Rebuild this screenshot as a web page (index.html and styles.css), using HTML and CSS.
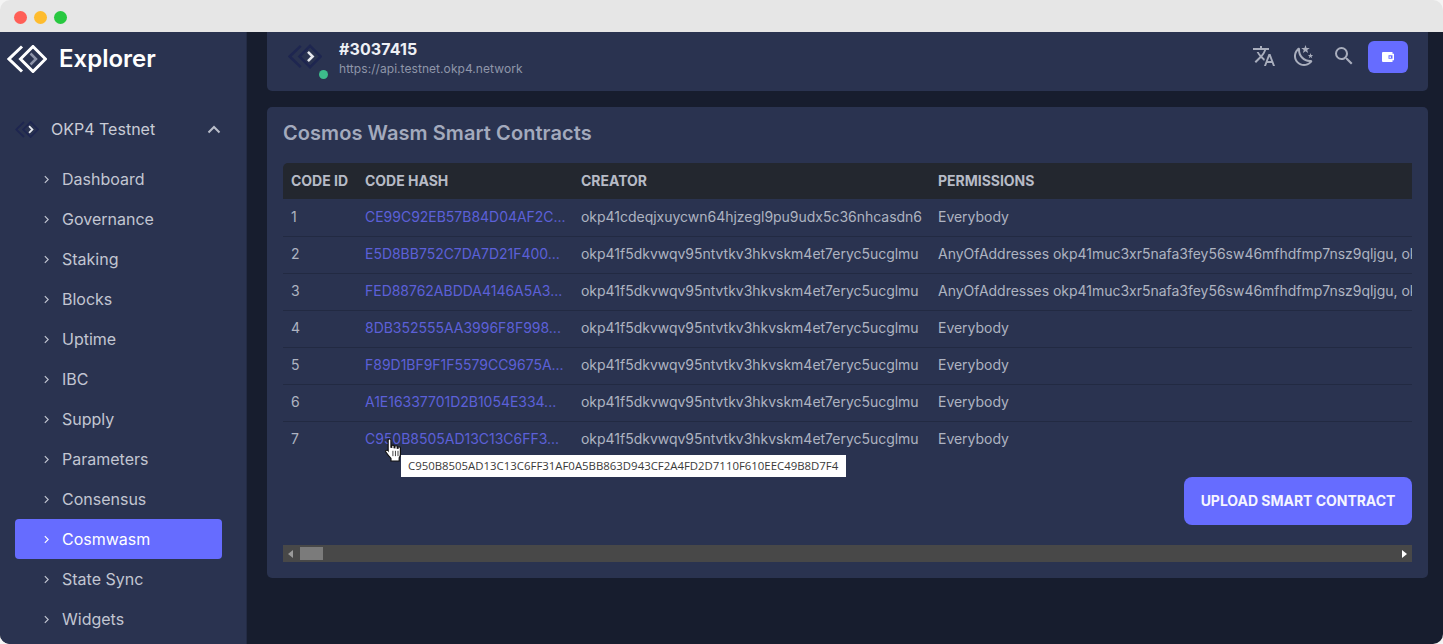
FILE: index.html
```html
<!DOCTYPE html>
<html lang="en">
<head>
<meta charset="utf-8">
<title>Cosmos Wasm Smart Contracts</title>
<link rel="stylesheet" href="styles.css">
</head>
<body>
<div class="window">
  <div class="titlebar">
    <span class="light red"></span><span class="light yellow"></span><span class="light green"></span>
  </div>
  <div class="app">
    <aside class="sidebar">
      <div class="brand">
        <svg class="brand-logo" viewBox="0 0 40 28"><path class="logo-back" d="M15 1.500 2 14l13 12.500"/><path class="logo-front" d="M26 1.500 38.500 14 26 26.500 13.500 14Z"/><path class="logo-chev" d="m23.500 8.500 5.500 5.500-5.500 5.500"/></svg>
        <span class="brand-name">Explorer</span>
      </div>
      <div class="chain">
        <svg class="chain-logo" viewBox="0 0 40 28"><path class="logo-back" d="M15 1.500 2 14l13 12.500"/><path class="logo-front" d="M26 1.500 38.500 14 26 26.500 13.500 14Z"/><path class="logo-chev" d="m23.500 8.500 5.500 5.500-5.500 5.500"/></svg>
        <span class="chain-name">OKP4 Testnet</span>
        <svg class="chain-toggle" viewBox="0 0 14 9"><path d="M1.500 7.500 7 2l5.500 5.500"/></svg>
      </div>
      <nav class="menu">
        <a class="menu-item"><svg class="chev" viewBox="0 0 6 10"><path d="m1 1 4 4-4 4"/></svg>Dashboard</a>
        <a class="menu-item"><svg class="chev" viewBox="0 0 6 10"><path d="m1 1 4 4-4 4"/></svg>Governance</a>
        <a class="menu-item"><svg class="chev" viewBox="0 0 6 10"><path d="m1 1 4 4-4 4"/></svg>Staking</a>
        <a class="menu-item"><svg class="chev" viewBox="0 0 6 10"><path d="m1 1 4 4-4 4"/></svg>Blocks</a>
        <a class="menu-item"><svg class="chev" viewBox="0 0 6 10"><path d="m1 1 4 4-4 4"/></svg>Uptime</a>
        <a class="menu-item"><svg class="chev" viewBox="0 0 6 10"><path d="m1 1 4 4-4 4"/></svg>IBC</a>
        <a class="menu-item"><svg class="chev" viewBox="0 0 6 10"><path d="m1 1 4 4-4 4"/></svg>Supply</a>
        <a class="menu-item"><svg class="chev" viewBox="0 0 6 10"><path d="m1 1 4 4-4 4"/></svg>Parameters</a>
        <a class="menu-item"><svg class="chev" viewBox="0 0 6 10"><path d="m1 1 4 4-4 4"/></svg>Consensus</a>
        <a class="menu-item active"><svg class="chev" viewBox="0 0 6 10"><path d="m1 1 4 4-4 4"/></svg>Cosmwasm</a>
        <a class="menu-item"><svg class="chev" viewBox="0 0 6 10"><path d="m1 1 4 4-4 4"/></svg>State Sync</a>
        <a class="menu-item"><svg class="chev" viewBox="0 0 6 10"><path d="m1 1 4 4-4 4"/></svg>Widgets</a>
      </nav>
    </aside>
    <main class="main">
      <header class="topbar">
        <div class="node">
          <div class="node-logo">
            <svg class="node-svg" viewBox="0 0 40 28"><path class="logo-back" d="M15 1.500 2 14l13 12.500"/><path class="logo-front" d="M26 1.500 38.500 14 26 26.500 13.500 14Z"/><path class="logo-chev" d="m23.500 8.500 5.500 5.500-5.500 5.500"/></svg>
            <span class="status-dot"></span>
          </div>
          <div class="node-text">
            <div class="node-height">#3037415</div>
            <div class="node-url">https://api.testnet.okp4.network</div>
          </div>
        </div>
        <div class="tools">
          <svg class="tool" viewBox="0 0 24 24"><path d="M12.870 15.070 10.330 12.560 10.360 12.530C12.100 10.590 13.340 8.360 14.070 6H17V4H10V2H8V4H1V6H12.170C11.500 7.920 10.440 9.750 9 11.350 8.070 10.320 7.300 9.190 6.690 8H4.690C5.420 9.630 6.420 11.170 7.670 12.560L2.580 17.580 4 19 9 14 12.110 17.110 12.870 15.070M18.500 10H16.500L12 22H14L15.120 19H19.870L21 22H23L18.500 10M15.880 17 17.500 12.670 19.120 17H15.880Z"/></svg>
          <svg class="tool" viewBox="0 0 24 24"><path d="M17.750 4.090 15.220 6.030 16.130 9.090 13.500 7.280 10.870 9.090 11.780 6.030 9.250 4.090 12.440 4 13.500 1 14.560 4 17.750 4.090M21.250 11 19.610 12.250 20.200 14.230 18.500 13.060 16.800 14.230 17.390 12.250 15.750 11 17.810 10.950 18.500 9 19.190 10.950 21.250 11M18.970 15.950C19.800 15.870 20.690 17.050 20.160 17.800 19.840 18.250 19.500 18.670 19.080 19.070 15.170 23 8.840 23 4.940 19.070 1.030 15.170 1.030 8.830 4.940 4.930 5.340 4.530 5.760 4.170 6.210 3.850 6.960 3.320 8.140 4.210 8.060 5.040 7.790 7.900 8.750 10.870 10.950 13.060 13.140 15.260 16.100 16.220 18.970 15.950M17.330 17.970C14.500 17.810 11.700 16.640 9.530 14.500 7.360 12.310 6.200 9.500 6.040 6.680 3.230 9.820 3.340 14.640 6.350 17.660 9.370 20.670 14.190 20.780 17.330 17.970Z"/></svg>
          <svg class="tool" viewBox="0 0 24 24"><path d="M9.500 3A6.500 6.500 0 0 1 16 9.500C16 11.110 15.410 12.590 14.440 13.730L14.710 14H15.500L20.500 19 19 20.500 14 15.500V14.710L13.730 14.440C12.590 15.410 11.110 16 9.500 16A6.500 6.500 0 0 1 3 9.500 6.500 6.500 0 0 1 9.500 3M9.500 5C7 5 5 7 5 9.500 5 12 7 14 9.500 14 12 14 14 12 14 9.500 14 7 12 5 9.500 5Z"/></svg>
          <button class="wallet-btn" type="button" aria-label="Wallet">
            <svg class="wallet-icon" viewBox="0 0 12 10"><path fill-rule="evenodd" d="M1 0h9.500v1.800H12v6.400h-1.500V10H1a1 1 0 0 1-1-1V1a1 1 0 0 1 1-1Zm5.500 3.200v3.600H10.500V3.200Zm1.700 1a.9.9 0 1 0 0 1.800.9.9 0 0 0 0-1.800Z"/></svg>
          </button>
        </div>
      </header>
      <section class="card">
        <h1 class="card-title">Cosmos Wasm Smart Contracts</h1>
        <div class="table-wrap">
          <table class="codes">
            <colgroup><col class="col-id"><col class="col-hash"><col class="col-creator"><col class="col-perm"></colgroup>
            <thead>
              <tr><th>Code Id</th><th>Code Hash</th><th>Creator</th><th>Permissions</th></tr>
            </thead>
            <tbody>
              <tr><td>1</td><td><a class="hash">CE99C92EB57B84D04AF2C...</a></td><td>okp41cdeqjxuycwn64hjzegl9pu9udx5c36nhcasdn6</td><td>Everybody</td></tr>
              <tr><td>2</td><td><a class="hash">E5D8BB752C7DA7D21F400...</a></td><td>okp41f5dkvwqv95ntvtkv3hkvskm4et7eryc5ucglmu</td><td>AnyOfAddresses okp41muc3xr5nafa3fey56sw46mfhdfmp7nsz9qljgu, okp41f5dkvwqv95ntvtkv3hkvskm4et7eryc5ucglmu</td></tr>
              <tr><td>3</td><td><a class="hash">FED88762ABDDA4146A5A3...</a></td><td>okp41f5dkvwqv95ntvtkv3hkvskm4et7eryc5ucglmu</td><td>AnyOfAddresses okp41muc3xr5nafa3fey56sw46mfhdfmp7nsz9qljgu, okp41f5dkvwqv95ntvtkv3hkvskm4et7eryc5ucglmu</td></tr>
              <tr><td>4</td><td><a class="hash">8DB352555AA3996F8F998...</a></td><td>okp41f5dkvwqv95ntvtkv3hkvskm4et7eryc5ucglmu</td><td>Everybody</td></tr>
              <tr><td>5</td><td><a class="hash">F89D1BF9F1F5579CC9675A...</a></td><td>okp41f5dkvwqv95ntvtkv3hkvskm4et7eryc5ucglmu</td><td>Everybody</td></tr>
              <tr><td>6</td><td><a class="hash">A1E16337701D2B1054E334...</a></td><td>okp41f5dkvwqv95ntvtkv3hkvskm4et7eryc5ucglmu</td><td>Everybody</td></tr>
              <tr class="last"><td>7</td><td><a class="hash">C950B8505AD13C13C6FF3...</a></td><td>okp41f5dkvwqv95ntvtkv3hkvskm4et7eryc5ucglmu</td><td>Everybody</td></tr>
            </tbody>
          </table>
        </div>
        <div class="actions"><button class="upload" type="button">Upload Smart Contract</button></div>
        <div class="scrollbar">
          <svg class="scroll-arrow" viewBox="0 0 5 8"><path d="M5 0v8L0 4Z"/></svg>
          <span class="scroll-thumb"></span>
          <span class="scroll-fill"></span>
          <svg class="scroll-arrow bright" viewBox="0 0 5 8"><path d="M0 0v8l5-4Z"/></svg>
        </div>
        <div class="tooltip">C950B8505AD13C13C6FF31AF0A5BB863D943CF2A4FD2D7110F610EEC49B8D7F4</div>
        <svg class="cursor" viewBox="1 0 14 22.500" preserveAspectRatio="none"><path d="M3.600 1.600c0-1 2.300-1 2.300 0v7.200l.6.100V7.400c0-1 2-1 2 0v1.700l.6.100V8c0-1 2-1 2 0v1.600l.6.100V9c0-1 2-.9 2 .2v6.300c0 1.300-.5 2.200-1 3.100v2.900H5.900v-2.400c-1.200-1.300-2.600-3.300-4.200-6-.7-1.300 1-2.300 1.900-1.100V1.600Z"/><path class="cursor-line" d="M7.500 12v5M9.600 12v5M11.700 12v5"/></svg>
      </section>
    </main>
  </div>
</div>
</body>
</html>
```
FILE: styles.css
```css
* { box-sizing: border-box; }
html, body { margin: 0; height: 100%; overflow: hidden; background: #f4f4f4; }
body { font-family: Inter, "Liberation Sans", sans-serif; }

.window { width: 1443px; height: 644px; display: flex; flex-direction: column; border-radius: 10px; overflow: hidden; }
.titlebar { height: 32px; flex: none; background: #e6e6e6; display: flex; align-items: center; gap: 7px; padding: 2px 0 0 14px; }
.light { width: 13px; height: 13px; border-radius: 50%; }
.red { background: #ff5f57; }
.yellow { background: #febc2e; }
.green { background: #28c840; }

.app { flex: 1; min-height: 0; display: flex; background: #171d2e; }

.sidebar { width: 247px; flex: none; background: #2a3350; border-right: 1px solid #232b44; overflow: hidden; }
.brand { height: 54px; display: flex; align-items: center; gap: 12px; padding-left: 7px; }
.brand-logo { width: 40px; height: 28px; flex: none; }
.brand .logo-back, .brand .logo-front { stroke: #fff; stroke-width: 3; }
.brand .logo-chev { stroke: #8d93a8; stroke-width: 2.500; }
.brand-name { color: #fff; font-size: 24px; font-weight: 600; line-height: 1; }

.logo-back, .logo-front, .logo-chev { fill: none; }
.logo-back, .logo-front { stroke: #1e2650; stroke-width: 3; }
.logo-chev { stroke: #e6e8ee; stroke-width: 3; }

.chain { height: 40px; margin-top: 23px; display: flex; align-items: center; padding-left: 15px; color: #c9ccd6; }
.chain-logo { width: 24px; height: 17px; flex: none; }
.chain-name { margin-left: 12px; font-size: 16px; }
.chain-toggle { width: 14px; height: 9px; margin-left: 52px; fill: none; stroke: #b9bdc9; stroke-width: 2; }

.menu { margin-top: 10px; display: flex; flex-direction: column; }
.menu-item { width: 207px; height: 40px; margin-left: 15px; padding-left: 29px; border-radius: 4px; display: flex; align-items: center; gap: 13px; color: #c2c6d2; font-size: 16px; }
.menu-item.active { background: #666cff; color: #fff; }
.chev { width: 5px; height: 9px; flex: none; fill: none; stroke: currentColor; stroke-width: 1.400; }

.main { flex: 1; min-width: 0; padding-left: 20px; padding-right: 15px; }
.topbar { height: 59px; background: #2a3350; border-radius: 0 0 5px 5px; display: flex; align-items: flex-start; justify-content: space-between; padding: 9px 20px 0 21px; }
.node { display: flex; gap: 17px; }
.node-logo { position: relative; width: 34px; height: 25px; margin-top: 3px; }
.node-svg { width: 34px; height: 25px; display: block; }
.status-dot { position: absolute; left: 31px; top: 26px; width: 9px; height: 9px; border-radius: 50%; background: #3dbb8b; }
.node-text { margin-top: -1px; }
.node-height { color: #eef0f5; font-size: 16px; font-weight: 700; line-height: 18px; letter-spacing: .1px; }
.node-url { color: #8f96a9; font-size: 12px; line-height: 20px; margin-top: 1px; letter-spacing: .06px; }
.tools { display: flex; align-items: center; gap: 16px; height: 32px; }
.tool { width: 24px; height: 24px; margin-top: -2px; fill: #a9aebd; }
.wallet-btn { width: 40px; height: 32px; margin-left: -4px; padding: 0; border: 0; border-radius: 6px; background: #666cff; display: flex; align-items: center; justify-content: center; }
.wallet-icon { width: 12px; height: 10px; fill: #fff; }

.card { position: relative; margin-top: 16px; height: 471px; background: #2a3350; border-radius: 5px; padding: 0 16px; }
.card-title { margin: 0 0 4px; height: 52px; line-height: 52px; color: #a3aabd; font-size: 20px; font-weight: 600; letter-spacing: .07px; }
.table-wrap { width: 1129px; overflow: hidden; }
.codes { width: 1129px; table-layout: fixed; border-collapse: collapse; font-size: 14px; letter-spacing: -.02px; }
.col-id { width: 74px; }
.col-hash { width: 216px; }
.col-creator { width: 357px; }
.codes th { height: 36px; padding: 0 8px 2px; text-align: left; background: #23272f; color: #b7bbc6; font-size: 14px; font-weight: 700; text-transform: uppercase; white-space: nowrap; }
.codes th:first-child { border-top-left-radius: 5px; }
.codes td { height: 37px; padding: 0 8px 2px; color: #aeb3c1; border-bottom: 1px solid #222a42; white-space: nowrap; overflow: hidden; }
.codes .last td { border-bottom: 0; }
.hash { color: #5c60d8; }

.actions { margin-top: 19px; display: flex; justify-content: flex-end; }
.upload { width: 228px; height: 48px; border: 0; border-radius: 8px; background: #666cff; color: #f5f5ff; font: 700 14px Inter, "Liberation Sans", sans-serif; letter-spacing: -.03px; text-transform: uppercase; padding: 0 0 2px; }

.scrollbar { margin-top: 20px; width: 1129px; height: 17px; background: #484848; display: flex; align-items: center; padding: 0 5px; }
.scroll-arrow { width: 5px; height: 8px; flex: none; fill: #9a9a9a; }
.scroll-arrow.bright { fill: #fff; }
.scroll-thumb { width: 23px; height: 13px; margin-left: 7px; background: #7b7b7b; flex: none; }
.scroll-fill { flex: 1; }

.tooltip { position: absolute; left: 134px; top: 348px; width: 445px; height: 22px; background: #fff; color: #3a3a3a; font: 11.400px/21px "Open Sans", sans-serif; padding-left: 7px; white-space: nowrap; }
.cursor { position: absolute; left: 118px; top: 331px; width: 17px; height: 24px; fill: #fff; stroke: #111; stroke-width: 1; }
.cursor-line { fill: none; stroke: #333; stroke-width: .8; }
```
